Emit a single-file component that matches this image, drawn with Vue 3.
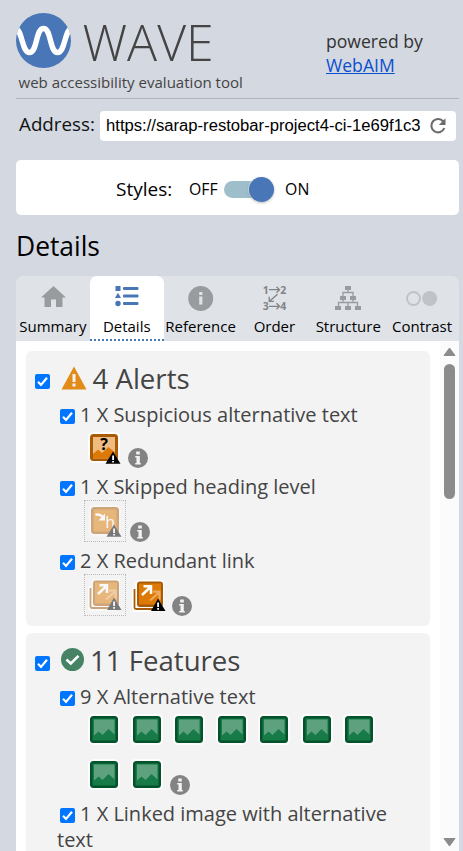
<script setup>
const tabs = [
  { id: 'summary', label: 'Summary' },
  { id: 'details', label: 'Details' },
  { id: 'reference', label: 'Reference' },
  { id: 'order', label: 'Order' },
  { id: 'structure', label: 'Structure' },
  { id: 'contrast', label: 'Contrast' },
]

const groups = [
  {
    id: 'alerts',
    title: '4 Alerts',
    items: [
      { label: '1 X Suspicious alternative text', icons: [{ kind: 'suspicious' }] },
      { label: '1 X Skipped heading level', icons: [{ kind: 'skipped', hidden: true }] },
      { label: '2 X Redundant link', icons: [{ kind: 'redundant', hidden: true }, { kind: 'redundant' }] },
    ],
  },
  {
    id: 'features',
    title: '11 Features',
    items: [
      { label: '9 X Alternative text', icons: Array.from({ length: 9 }, () => ({ kind: 'alt' })) },
      { label: '1 X Linked image with alternative text', icons: [] },
    ],
  },
]
</script>

<template>
  <div class="sidebar">
    <header class="top">
      <div class="brand">
        <div class="brand-row">
          <svg class="logo" viewBox="0 0 56 56">
            <defs><clipPath id="disc"><circle cx="27.500" cy="27.500" r="27.500" /></clipPath></defs>
            <circle cx="27.500" cy="27.500" r="27.500" fill="#4876b7" />
            <path clip-path="url(#disc)" d="M-1.500 15C6.500 15 5.500 39.500 13.500 39.500S19.500 15.500 27.500 15.500S33.500 39.500 41.500 39.500S48.500 15 56.500 15" fill="none" stroke="#fff" stroke-width="5.400" />
          </svg>
          <span class="wordmark">WAVE</span>
        </div>
        <div class="tagline">web accessibility evaluation tool</div>
      </div>
      <div class="powered">powered by<br /><a href="#">WebAIM</a></div>
    </header>

    <div class="address">
      <label>Address:</label>
      <div class="url">
        <span>https://sarap-restobar-project4-ci-1e69f1c3</span>
        <svg width="18" height="18" viewBox="0 0 18 18">
          <path d="M14.300 4.500A6.700 6.700 0 1 0 15.300 11" fill="none" stroke="#6b6b6b" stroke-width="2.100" />
          <path d="M16.500 1.200V8H9.800Z" fill="#6b6b6b" />
        </svg>
      </div>
    </div>

    <div class="styles">
      <span class="styles-label">Styles:</span>
      <span class="state">OFF</span>
      <span class="switch"><span class="knob"></span></span>
      <span class="state">ON</span>
    </div>

    <h2>Details</h2>

    <nav class="tabs">
      <div v-for="t in tabs" :key="t.id" class="tab" :class="{ active: t.id === 'details' }">
        <svg v-if="t.id === 'summary'" width="28" height="28" viewBox="0 0 28 28" fill="#999c9f">
          <path d="M14.500 2L27 13.500H23.500V23H17V15.500H12V23H5.500V13.500H2Z" />
        </svg>
        <svg v-else-if="t.id === 'details'" width="28" height="28" viewBox="0 0 28 28" fill="#4876b7">
          <rect x="2.500" y="2" width="5" height="5" /><path d="M5 8.800L8 14H2Z" /><circle cx="5" cy="19.500" r="2.700" />
          <rect x="10" y="3" width="15.500" height="3" rx="1" /><rect x="10" y="10.500" width="15.500" height="3" rx="1" /><rect x="10" y="18" width="15.500" height="3" rx="1" />
        </svg>
        <svg v-else-if="t.id === 'reference'" width="28" height="28" viewBox="0 0 28 28">
          <circle cx="13.700" cy="14.500" r="12.500" fill="#999c9f" />
          <path d="M12.200 8H15.400V11H12.200ZM12.200 12.500H15.400V20.500H12.200Z" fill="#dfe2e7" />
        </svg>
        <svg v-else-if="t.id === 'order'" width="28" height="28" viewBox="0 0 28 28">
          <g class="order-num"><text x="2.700" y="9.700">1</text><text x="20.300" y="9.700">2</text><text x="2.700" y="26.300">3</text><text x="20.300" y="26.300">4</text></g>
          <path d="M9 5.700H19.500M16.500 2.700L19.500 5.700L16.500 8.700M9 22.300H19.500M16.500 19.300L19.500 22.300L16.500 25.300M17.500 10.300L9.500 17.200M9.200 12.800V17.400H13.800" fill="none" stroke="#818486" stroke-width="1.300" />
        </svg>
        <svg v-else-if="t.id === 'structure'" width="28" height="28" viewBox="0 0 28 28">
          <path d="M14 5V8.500M9 12V8.500H19V12M4.500 23V18.500H23.500V23M14 18.500V23M9 15V18.500M19 15V18.500" fill="none" stroke="#999c9f" stroke-width="1.300" />
          <path d="M11 2H17V6H11ZM6 12H12V16H6ZM16 12H22V16H16ZM1 22H7V26H1ZM11 22H17V26H11ZM21 22H27V26H21Z" fill="#999c9f" />
        </svg>
        <svg v-else width="32" height="28" viewBox="0 0 32 28">
          <circle cx="7.500" cy="14.500" r="6.500" fill="none" stroke="#bfc2c6" stroke-width="2" />
          <circle cx="23.700" cy="14.500" r="7.500" fill="#bfc2c6" />
        </svg>
        <span class="tab-label">{{ t.label }}</span>
      </div>
    </nav>

    <main class="body">
      <div class="list">
        <section v-for="g in groups" :key="g.id" class="group">
          <h3>
            <svg class="check" viewBox="0 0 15 15"><rect width="15" height="15" rx="2" fill="#0075ff" /><path d="M3 7.800L6 10.900L12 3.700" fill="none" stroke="#fff" stroke-width="2.200" /></svg>
            <svg v-if="g.id === 'alerts'" class="badge alert" width="26" height="24" viewBox="0 0 26 24">
              <path d="M13 0.500L25.500 23.500H0.500Z" fill="#e28b18" /><path d="M11.500 8H14.500V16H11.500ZM11.500 17.500H14.500V20.500H11.500Z" fill="#f3f3f3" />
            </svg>
            <svg v-else class="badge feature" width="24" height="24" viewBox="0 0 24 24">
              <circle cx="12.500" cy="12.500" r="11.500" fill="#468365" /><path d="M6.500 12.500L10.800 16.500L18.500 8.800" fill="none" stroke="#fff" stroke-width="2.600" />
            </svg>
            <span>{{ g.title }}</span>
          </h3>
          <div v-for="item in g.items" :key="item.label" class="item">
            <div class="label">
              <svg class="check" viewBox="0 0 15 15"><rect width="15" height="15" rx="2" fill="#0075ff" /><path d="M3 7.800L6 10.900L12 3.700" fill="none" stroke="#fff" stroke-width="2.200" /></svg>
              <span>{{ item.label }}</span>
            </div>
            <div v-if="item.icons.length" class="icons">
              <span v-for="(ic, i) in item.icons" :key="i" class="icon" :class="{ hidden: ic.hidden }">
                <svg v-if="ic.kind === 'alt'" width="34" height="34" viewBox="0 0 34 34">
                  <rect x="1" y="1" width="32" height="31" rx="5" fill="#fdfdfd" />
                  <rect x="3" y="3" width="28" height="27" rx="3.500" fill="#04522a" />
                  <rect x="5.500" y="5.500" width="23" height="22" fill="#177b48" />
                  <path d="M7 6.500H27.500V21.500L21.500 16L15.500 22L11.500 18.500L7 22.500Z" fill="#5ea17e" />
                </svg>
                <svg v-else-if="ic.kind === 'redundant'" width="34" height="34" viewBox="0 0 34 34">
                  <path d="M6 1H32V28H28V33H2Q0 33 0 31V9H3V4Z" fill="#fff" />
                  <path d="M2.500 10V28.500Q2.500 30 4 30H24" fill="none" stroke="#a85a05" stroke-width="1.800" />
                  <rect x="5" y="2.500" width="26" height="25.500" rx="3" fill="#a85a05" /><rect x="7" y="4.500" width="22" height="21" fill="#dd7a05" />
                  <path d="M18 21.500L27 13.500M21 12.700H27.500V20.500" fill="none" stroke="#eda95c" stroke-width="2.200" />
                  <path d="M10 16L18.500 8M11.500 7.300H19V15" fill="none" stroke="#fff" stroke-width="2.500" />
                  <path d="M26 19.500L33.500 32H19Z" fill="#000" /><path d="M25.200 23.500H27V28H25.200ZM25.200 29H27V30.700H25.200Z" fill="#fff" />
                </svg>
                <svg v-else width="34" height="34" viewBox="0 0 34 34">
                  <rect x="1" y="1" width="32" height="31" rx="5" fill="#fdfdfd" />
                  <rect x="3" y="3" width="28" height="27" rx="3.500" fill="#a85a05" />
                  <template v-if="ic.kind === 'suspicious'">
                    <rect x="6" y="6" width="22" height="21.500" fill="#efbb80" />
                    <path d="M6 23L11 18.500L15 22L21.500 16L28 21.500V27.500H6Z" fill="#dd7a05" />
                    <text class="q" x="13.300" y="18.700">?</text>
                  </template>
                  <template v-else>
                    <rect x="5.500" y="5.500" width="23" height="22" fill="#dd7a05" />
                    <path d="M7.500 11C11 9.300 13 11 15 13" fill="none" stroke="#fff" stroke-width="2.400" /><path d="M17 9.500V16.500H10.500Z" fill="#fff" />
                    <text class="h" x="17.300" y="23.500">h</text>
                  </template>
                  <path d="M26 20.500L33.500 32.700H18.500Z" fill="#000" /><path d="M25.200 24.500H27V29H25.200ZM25.200 30H27V31.500H25.200Z" fill="#fff" />
                </svg>
              </span>
              <svg class="info" width="20" height="20" viewBox="0 0 20 20">
                <circle cx="10" cy="10" r="10" fill="#838383" /><path d="M8.200 3.500H11.800V6.500H8.200ZM7.200 8H11.800V15H12.800V16.500H7.200V15H8.500V9.500H7.200Z" fill="#f3f3f3" />
              </svg>
            </div>
          </div>
        </section>
      </div>
      <div class="scroll">
        <svg width="13" height="10" viewBox="0 0 13 10"><path d="M6.500 1L12 8.500H1Z" fill="#8b8b8b" stroke="#8b8b8b" stroke-linejoin="round" /></svg>
        <div class="thumb"></div>
        <svg class="down" width="13" height="10" viewBox="0 0 13 10"><path d="M6.500 9L12 1.500H1Z" fill="#8b8b8b" stroke="#8b8b8b" stroke-linejoin="round" /></svg>
      </div>
    </main>
  </div>
</template>

<style>
body { background: #d4d8e0; overflow: hidden; }
</style>

<style scoped>
* { box-sizing: border-box; }
.sidebar { width: 463px; height: 851px; padding: 0 4px 0 16px; display: flex; flex-direction: column; overflow: hidden; font-family: "Open Sans", sans-serif; color: #000; background: #d4d8e0; }
.top { height: 99px; flex: none; display: flex; justify-content: space-between; border-bottom: 1px solid #b1b4b9; }
.brand-row { display: flex; align-items: center; height: 56px; margin-top: 13px; }
.logo { width: 56px; height: 56px; }
.wordmark { margin: 2px 0 0 10.500px; font-size: 50px; font-weight: 300; line-height: 56px; color: #444; }
.tagline { margin: 3px 0 0 2.500px; font-size: 15.050px; line-height: 20px; color: #444; white-space: nowrap; }
.powered { width: 133px; padding-top: 29px; font-size: 17.600px; line-height: 24px; color: #333; }
.powered a { color: #0b50d0; text-decoration-thickness: 1px; }
.address { display: flex; align-items: center; flex: none; height: 30px; margin-top: 12px; padding-left: 3px; padding-right: 3px; }
.address label { width: 81px; font-size: 18.800px; line-height: 26px; margin-top: -4px; color: #111; white-space: nowrap; }
.url { flex: 1; height: 30px; padding: 0 9px 0 6px; display: flex; align-items: center; justify-content: space-between; border-radius: 4px; background: #fff; font: 16.650px "Liberation Sans", sans-serif; white-space: nowrap; }
.styles { display: flex; align-items: center; flex: none; height: 55px; margin-top: 19px; padding: 0 0 0 100px; border-radius: 5px; background: #fff; font-size: 15.800px; line-height: 26px; }
.styles-label { width: 73px; font-size: 19px; margin-top: 2px; }
.state { margin-top: 3px; }
.switch { display: flex; align-items: center; justify-content: flex-end; width: 50px; height: 17px; margin: 4px 11px 0 6.500px; border-radius: 9px; background: #9ebfca; }
.knob { width: 25px; height: 25px; flex: none; border-radius: 50%; background: #4876b7; box-shadow: 0 1px 3px #0004, 0 0 0 1px #fff8; }
h2 { flex: none; margin: 13px 0 0; font-size: 26.400px; font-weight: 400; line-height: 37px; height: 48px; }
.tabs { display: grid; grid-template-columns: repeat(6, 1fr); flex: none; height: 65px; border-radius: 7px 7px 0 0; background: #dfe2e7; overflow: hidden; }
.tab { display: flex; flex-direction: column; align-items: center; padding-top: 8px; }
.tab.active { background: #fff; border-radius: 7px 7px 0 0; border-bottom: 2px dotted #4876b7; }
.tab-label { margin-top: 4px; font-size: 15px; line-height: 20px; white-space: nowrap; }
.order-num { font: bold 10.500px "Open Sans", sans-serif; fill: #818486; }
.body { flex: 1; min-height: 0; display: flex; background: #fff; overflow: hidden; }
.list { width: 424px; padding: 10px 10px 0; }
.group { height: 275px; margin-bottom: 7px; border-radius: 6px; background: #f3f3f3; color: #444; }
h3 { display: flex; align-items: center; height: 51px; margin: 0; padding: 5px 0 0 9px; font-size: 27.600px; font-weight: 400; line-height: 40px; }
h3 span { margin-top: -2px; white-space: nowrap; }
.check { width: 15px; height: 15px; flex: none; }
h3 .check { margin-top: 4px; }
.badge { flex: none; }
.alert { margin: -3px 6px 0 10.500px; }
.feature { margin: -5px 6px 0 10px; }
.item { padding-left: 31px; margin-bottom: 6px; }
.label { padding-right: 20px; font-size: 20px; line-height: 26px; }
.label .check { margin: 0 5px 0 3px; vertical-align: -2px; }
.icons { display: flex; flex-wrap: wrap; align-items: flex-end; gap: 5px 2.500px; width: 304px; margin-left: 27px; }
.icon { display: flex; align-items: center; justify-content: center; width: 40px; height: 40px; }
.icon.hidden { width: 42px; height: 42px; border: 1px dotted #bbb; }
.icon.hidden svg { opacity: 0.5; }
.info { margin-left: 1px; }
.q { font: bold 16px "Open Sans", sans-serif; fill: #000; }
.h { font: 16px "Open Sans", sans-serif; fill: #fff; }
.scroll { width: 19px; display: flex; flex-direction: column; align-items: center; padding: 6px 0 4px; background: #fbfbfb; }
.scroll svg { flex: none; }
.thumb { width: 11px; height: 135px; margin-top: 7px; border-radius: 6px; background: #8b8b8b; }
.down { margin-top: auto; }
</style>
